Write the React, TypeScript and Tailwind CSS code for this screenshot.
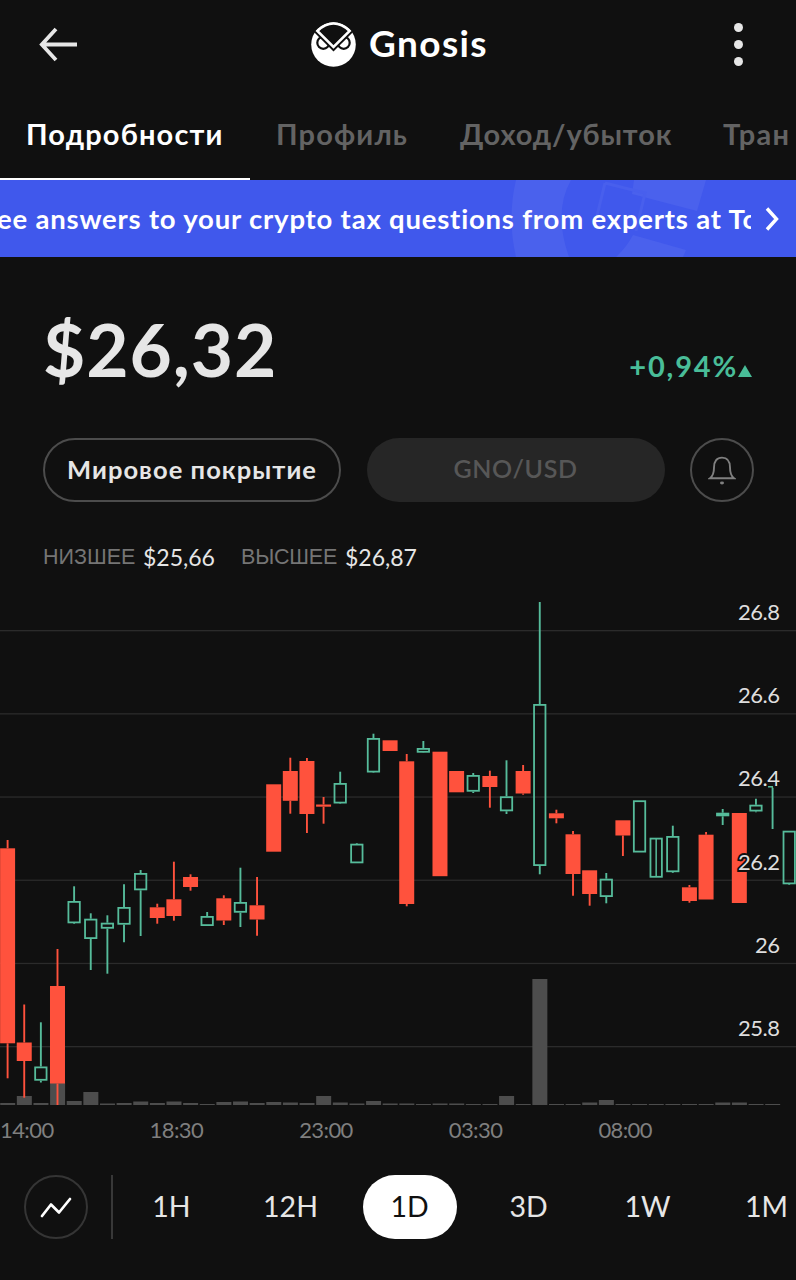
import clsx from 'clsx'

interface Candle {
  up: boolean
  high: number
  top: number
  bottom: number
  low: number
}

const TABS = [
  { label: 'Подробности', box: 'w-[250px]', text: 'tracking-[1.15px]' },
  { label: 'Профиль', box: 'w-[184px]', text: 'tracking-[1.15px]' },
  { label: 'Доход/убыток', box: 'w-[263px]', text: 'tracking-[0.85px]' },
  { label: 'Тран', box: 'w-[220px]', text: 'tracking-[1.3px]' },
]

const RANGES = ['1H', '12H', '1D', '3D', '1W', '1M']
const TIMES = ['14:00', '18:30', '23:00', '03:30', '08:00']
const LEVELS = ['26.8', '26.6', '26.4', '26.2', '26', '25.8']

// The chart's own y axis starts at CHART_TOP
const CHART_TOP = 590
const STEP = 16.63

const c = (up: boolean, high: number, top: number, bottom: number, low: number): Candle => ({ up, high, top, bottom, low })

const CANDLES: Candle[] = [
  c(false, 840, 848.3, 1043.3, 1078.3),
  c(false, 1004.5, 1042.5, 1061, 1097.7),
  c(true, 1022.3, 1066.5, 1080.7, 1082.5),
  c(false, 949, 986, 1083.5, 1105),
  c(true, 886.3, 901, 923.3, 924),
  c(true, 913.3, 918.7, 939, 970),
  c(true, 915.3, 922.7, 928.7, 973.7),
  c(true, 884.3, 907, 924.7, 942.3),
  c(true, 870, 873, 890.3, 936),
  c(false, 903.7, 907.3, 918, 923.7),
  c(false, 861.7, 899.3, 916, 920.7),
  c(false, 874.3, 877, 887, 890.7),
  c(true, 912, 916, 926, 926),
  c(false, 895.3, 898.3, 920.5, 925),
  c(true, 867.7, 902, 912.7, 927),
  c(false, 877, 905.3, 919.5, 935.7),
  c(false, 784.3, 784.3, 851.7, 851.7),
  c(false, 757.7, 771, 800.8, 813.7),
  c(false, 758, 761, 814, 833),
  c(false, 797, 804.5, 806.7, 823.7),
  c(true, 771.7, 783, 803.5, 804),
  c(true, 843, 843.7, 863.3, 863.3),
  c(true, 733.7, 738, 772.5, 773),
  c(false, 740.3, 740.3, 751, 751),
  c(false, 754, 761.3, 904, 906.3),
  c(true, 741, 748, 752.7, 753),
  c(false, 751.7, 751.7, 876.2, 876.2),
  c(false, 771, 771, 792.3, 792.3),
  c(true, 773, 775, 791.7, 793),
  c(false, 770.7, 776, 787, 807.7),
  c(true, 760.3, 796.3, 811.3, 814),
  c(false, 765, 771, 793.5, 794.7),
  c(true, 602, 704, 866, 874.3),
  c(false, 809.7, 813.3, 818.3, 823.3),
  c(false, 831, 834.3, 874, 895.7),
  c(false, 870.3, 870.3, 894, 905.7),
  c(true, 873, 878.7, 897, 903.3),
  c(false, 820.3, 820.3, 835.5, 856),
  c(true, 800.3, 800.3, 852.5, 852.5),
  c(true, 837.7, 837.7, 877.7, 877.7),
  c(true, 825.7, 836, 872.2, 873),
  c(false, 885, 887.3, 901, 902.7),
  c(false, 832, 834.7, 899.5, 899.5),
  c(true, 809, 812.7, 816.3, 825),
  c(false, 813, 813, 903, 903),
  c(true, 798.7, 804.7, 811.5, 812.3),
  c(true, 787, 787, 787, 829),
  c(true, 830.7, 830.7, 884.3, 885),
]

const VOLUMES = [
  2, 9, 2, 22, 4, 13, 1.5, 2, 3.5, 2, 3.5, 2, 1, 3, 3.5, 2, 3, 2.5, 2, 9, 2.5, 1.5, 4, 1.5,
  1.5, 1, 1.5, 1.5, 1, 1, 9, 1, 126, 1, 1, 2.5, 5, 1, 1, 1, 1, 1, 1, 2.5, 2.5, 1, 1,
]

export default function App() {
  return (
    <div className="h-[1280px] w-[796px] overflow-hidden bg-[#101010] font-['Lato','Noto_Sans',sans-serif] text-[#e6e6e6]">
      <Header />
      <nav className="flex h-[90px] w-full overflow-hidden">
        {TABS.map((tab, i) => (
          <button
            key={tab.label}
            className={clsx(
              'h-full shrink-0 border-b-2 pl-[26px] text-left text-[29px] leading-[82px] font-bold whitespace-nowrap',
              tab.box,
              tab.text,
              i === 0 ? 'border-white text-white' : 'border-transparent text-[#636363]',
            )}
          >
            {tab.label}
          </button>
        ))}
      </nav>
      <Banner />
      <Price />
      <Chart />
      <Ranges />
    </div>
  )
}

function Header() {
  return (
    <header className="mb-[2px] flex h-[88px] items-center pr-[53px] pl-[39px]">
      <svg className="h-[36px] w-[40px]" viewBox="0 0 40 36" fill="none" stroke="#e6e6e6" strokeWidth="3.8">
        <path d="M17 3 2.8 18.5 17 34M3 18.5h35" />
      </svg>
      <div className="ml-[232px] flex items-center gap-[13px]">
        <OwlLogo />
        <h1 className="-mt-[4px] text-[37px] leading-none font-bold tracking-[1.4px] text-white">Gnosis</h1>
      </div>
      <div className="ml-auto flex flex-col gap-2">
        <span className="size-[9px] rounded-full bg-[#e6e6e6]" />
        <span className="size-[9px] rounded-full bg-[#e6e6e6]" />
        <span className="size-[9px] rounded-full bg-[#e6e6e6]" />
      </div>
    </header>
  )
}

function OwlLogo() {
  return (
    <svg className="size-[45px]" viewBox="0 0 45 45" fill="none">
      <circle cx="22.5" cy="22.5" r="22.3" fill="#fff" />
      <circle cx="12.3" cy="20.8" r="6" fill="#fff" stroke="#101010" strokeWidth="2.2" />
      <circle cx="32.7" cy="20.8" r="6" fill="#fff" stroke="#101010" strokeWidth="2.2" />
      <path d="M2.4 9.4 22.5 29.4 42.6 9.4 22.5 6Z" fill="#101010" />
      <path d="M6.4 9Q22.5-6 38.6 9L22.5 25Z" fill="#101010" stroke="#fff" strokeWidth="2.5" />
    </svg>
  )
}

function Banner() {
  return (
    <div className="relative flex h-[77px] items-center justify-between overflow-hidden bg-[#4058ec] pr-[17px]">
      <svg className="absolute top-0 left-[508px] h-[77px] w-[200px]" viewBox="0 0 200 77" fill="#4a61ed">
        <path d="M8 0H63Q45 32 61 77H8Q-1 38 8 0ZM126 0H198L189 31 124 14ZM125 55 178 70 175 77H108Q118 68 125 55Z" />
        <path d="M97 3 137 13 128 51M97 3 88 40" fill="none" stroke="#485fed" strokeWidth="3" />
      </svg>
      <p className="relative -ml-[3px] w-[754px] overflow-hidden text-[27.5px] leading-[38px] font-bold tracking-[0.8px] whitespace-nowrap text-white">
        ee answers to your crypto tax questions from experts at To
      </p>
      <svg className="relative h-[24px] w-[14px] shrink-0" viewBox="0 0 14 24" fill="none" stroke="#fff" strokeWidth="3.4">
        <path d="M2 1.5 11.5 12 2 22.5" />
      </svg>
    </div>
  )
}

function Price() {
  return (
    <section className="h-[333px] pt-[48px] pr-[42px] pl-[43px]">
      <div className="flex h-[92px] items-start justify-between">
        <div className="text-[73px] leading-[89px] font-bold tracking-[0.9px]">$26,32</div>
        <div className="flex items-baseline pt-[42px] pr-[2px] text-[#49bd98]">
          <span className="text-[29px] leading-[38px] font-bold tracking-[1.8px]">+0,94%</span>
          <svg className="h-[12px] w-[14px]" viewBox="0 0 14 12" fill="currentColor">
            <path d="M7 0 14 12H0Z" />
          </svg>
        </div>
      </div>
      <div className="mt-[41px] flex h-[64px] justify-between">
        <button className="w-[298px] rounded-full border-2 border-[#4c4c4c] pb-[2px] text-[25.5px] font-bold tracking-[1.05px] whitespace-nowrap">
          Мировое покрытие
        </button>
        <button className="w-[298px] rounded-full bg-[#262626] pb-[2px] text-[25px] font-semibold tracking-[0.6px] text-[#575757]">
          GNO/USD
        </button>
        <button className="flex w-[64px] items-center justify-center rounded-full border-2 border-[#4c4c4c]">
          <svg className="h-[30px] w-[28px]" viewBox="0 0 28 30" fill="none" stroke="#808080" strokeWidth="1.9">
            <path d="M2 23.2C5 21 6 17.5 6 12.5 6 6 9 2.6 14 2.6S22 6 22 12.5C22 17.5 23 21 26 23.2Z" />
            <ellipse cx="14" cy="28" rx="2" ry="1.4" fill="#808080" stroke="none" />
          </svg>
        </button>
      </div>
      <div className="mt-[38px] flex items-center text-[23px] leading-[32px]">
        <span className="w-[100px] pt-px font-['Liberation_Sans',sans-serif] text-[21.5px] text-[#757575]">НИЗШЕЕ</span>
        <span className="w-[98px]">$25,66</span>
        <span className="w-[104px] pt-px font-['Liberation_Sans',sans-serif] text-[21.5px] tracking-[-0.2px] text-[#757575]">ВЫСШЕЕ</span>
        <span>$26,87</span>
      </div>
    </section>
  )
}

function Chart() {
  return (
    <section>
      <svg className="block h-[520px] w-[796px]" viewBox={`0 ${CHART_TOP} 796 520`}>
        {LEVELS.map((level, i) => (
          <rect key={level} x="0" y={630 + i * 83.2} width="796" height="1.3" fill="#2b2b2b" />
        ))}
        {VOLUMES.map((v, i) => (
          <rect key={i} x={i * STEP + 0.2} y={1105 - v} width="15" height={v} fill="#4d4d4d" />
        ))}
        {CANDLES.map((candle, i) => (
          <CandleMark key={i} candle={candle} x={i * STEP + 7.6} />
        ))}
        {/* candle 39 has its wick drawn through the hollow body */}
        <path d={`M${39 * STEP + 7.6} 838V877M768 786.8H773`} stroke="#56bc9b" strokeWidth="1.5" />
        <g fill="#dedede" stroke="#101010" strokeWidth="4" paintOrder="stroke" fontSize="22" letterSpacing="-0.5" textAnchor="end">
          {LEVELS.map((level, i) => (
            <text key={level} x="779.5" y={620 + i * 83.2}>{level}</text>
          ))}
        </g>
      </svg>
      <div className="flex h-[40px] text-[22px] leading-[39px] tracking-[-0.6px] text-[#7f7f7f]">
        {TIMES.map(time => (
          <span key={time} className="w-[149.6px]">{time}</span>
        ))}
      </div>
    </section>
  )
}

function CandleMark({ candle, x }: { candle: Candle; x: number }) {
  const { up, high, top, bottom, low } = candle
  const color = up ? '#56bc9b' : '#ff523d'
  return (
    <g stroke={color} strokeWidth="1.9">
      {high < top && <path d={`M${x} ${high}V${top}`} />}
      {low > bottom && <path d={`M${x} ${bottom}V${low}`} />}
      {up ? (
        bottom > top && (
          <rect x={x - 5.7} y={top + 0.9} width="11.4" height={bottom - top - 1.8} fill="none" strokeWidth="1.8" />
        )
      ) : (
        <rect x={x - 7.5} y={top} width="15" height={bottom - top} fill={color} stroke="none" />
      )}
    </g>
  )
}

function Ranges() {
  return (
    <div className="flex h-[129px] items-start pt-[25px] pl-[24px]">
      <button className="flex size-[64px] shrink-0 items-center justify-center rounded-full border-2 border-[#353535]">
        <svg className="h-[22px] w-[34px]" viewBox="0 0 34 22" fill="none" stroke="#fff" strokeWidth="2.7" strokeLinecap="round" strokeLinejoin="round">
          <path d="M3 20 12 8.5 20 16.5 31 3" />
        </svg>
      </button>
      <div className="ml-[23px] h-[64px] w-[2px] shrink-0 bg-[#383838]" />
      <div className="-ml-px flex text-[28.5px] leading-[62px]">
        {RANGES.map(range => (
          <button key={range} className="flex w-[119px] shrink-0 justify-center">
            <span className={clsx('h-[64px] w-[94px] rounded-full', range === '1D' && 'bg-white text-[#101010]')}>
              {range}
            </span>
          </button>
        ))}
      </div>
    </div>
  )
}
